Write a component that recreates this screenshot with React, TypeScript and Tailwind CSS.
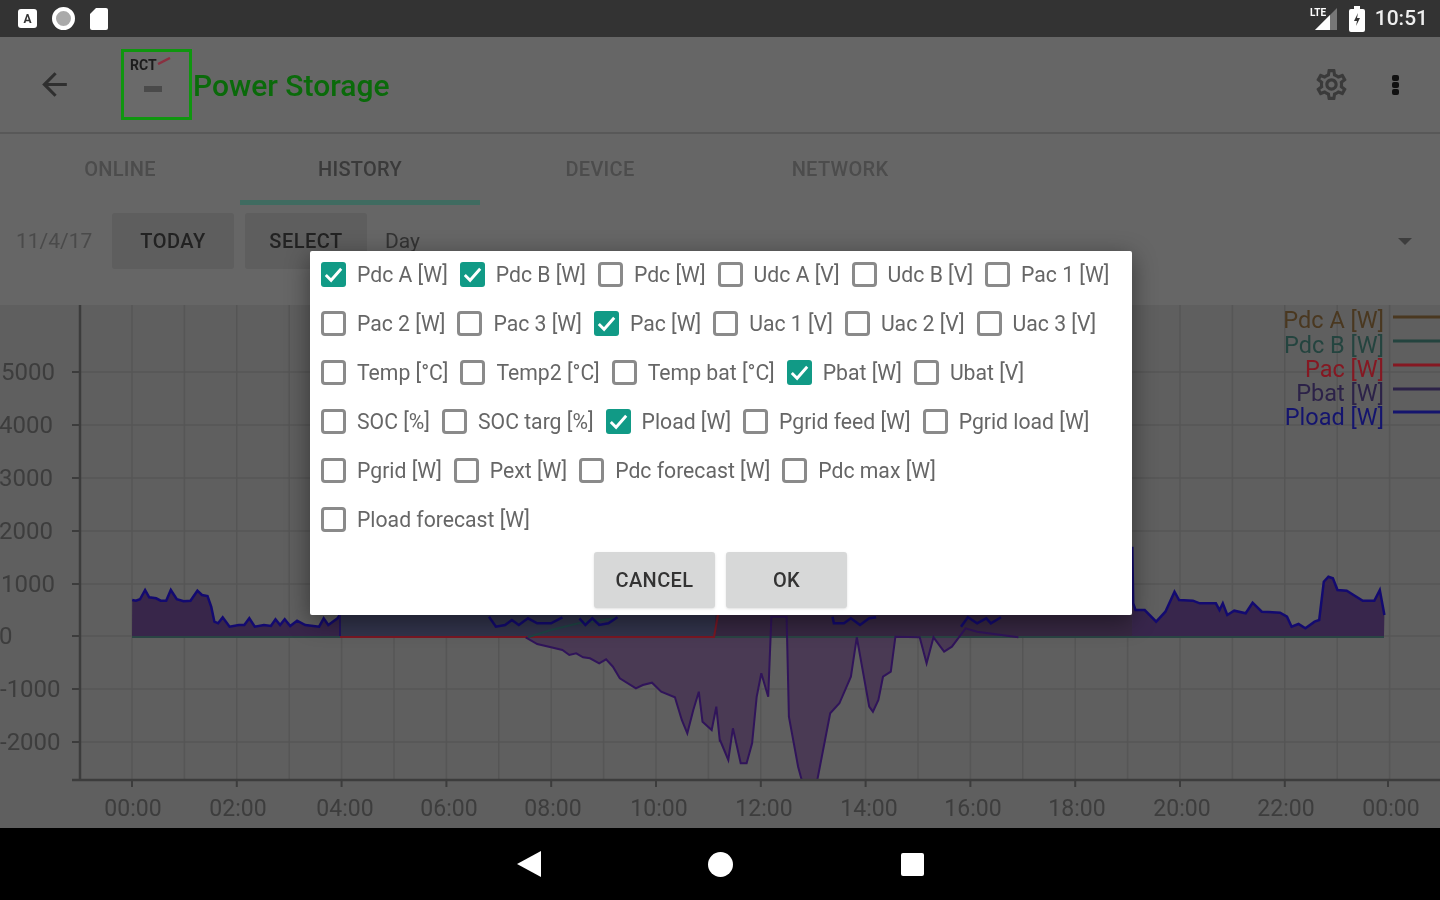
import { MdArrowBack, MdOutlineSettings } from 'react-icons/md'

const rows: [string, boolean][][] = [
  [['Pdc A [W]', true], ['Pdc B [W]', true], ['Pdc [W]', false], ['Udc A [V]', false], ['Udc B [V]', false], ['Pac 1 [W]', false]],
  [['Pac 2 [W]', false], ['Pac 3 [W]', false], ['Pac [W]', true], ['Uac 1 [V]', false], ['Uac 2 [V]', false], ['Uac 3 [V]', false]],
  [['Temp [°C]', false], ['Temp2 [°C]', false], ['Temp bat [°C]', false], ['Pbat [W]', true], ['Ubat [V]', false]],
  [['SOC [%]', false], ['SOC targ [%]', false], ['Pload [W]', true], ['Pgrid feed [W]', false], ['Pgrid load [W]', false]],
  [['Pgrid [W]', false], ['Pext [W]', false], ['Pdc forecast [W]', false], ['Pdc max [W]', false]],
  [['Pload forecast [W]', false]],
]

const yLabels = [
  ['5000', 372, 1], ['4000', 425, -1], ['3000', 478, -1], ['2000', 531, -1], ['1000', 584, 1], ['0', 636, -1], ['-1000', 689, 0], ['-2000', 742, 0],
] as const

const xLabels = [
  ['00:00', 132], ['02:00', 237], ['04:00', 344], ['06:00', 448], ['08:00', 552], ['10:00', 658], ['12:00', 763],
  ['14:00', 868], ['16:00', 972], ['18:00', 1076], ['20:00', 1181], ['22:00', 1285], ['00:00', 1390],
] as const

const legend = [
  ['Pdc A [W]', 327, 317, '#4a3820'],
  ['Pdc B [W]', 352, 341, '#24443f'],
  ['Pac [W]', 376, 365, '#851822'],
  ['Pbat [W]', 400, 389, '#2c2248'],
  ['Pload [W]', 424, 412, '#14146e'],
] as const

// traces were read off a crop stretched 2.178x across and 3x down, so points are in crop units
const toPts = (pts: number[][], offsetX: number) =>
  pts.map(([x, y]) => `${(offsetX + x / 2.178).toFixed(1)},${(560 + y / 3).toFixed(1)}`).join(' ')

const loadLeft = toPts([[288,120],[296,122],[305,118],[316,90],[325,112],[340,115],[350,122],[362,122],[372,90],[385,118],[400,124],[415,122],[430,92],[440,105],[452,108],[460,140],[467,185],[475,190],[485,172],[500,200],[520,195],[532,195],[543,175],[555,200],[575,195],[590,198],[600,178],[610,195],[620,178],[632,198],[647,182],[665,195],[695,200],[705,175],[715,195],[735,175],[740,165]], 0)
const loadMid = toPts([[1065,170],[1080,200],[1100,195],[1115,180],[1130,195],[1150,175],[1170,190],[1200,190],[1225,172]], 0)
const loadMid2 = toPts([[1262,175],[1275,195],[1290,175],[1305,195],[1325,190],[1345,172]], 0)
const loadRightBits = toPts([[245,170],[248,190],[270,190],[285,175],[305,195],[325,175],[340,172]], 720)
const loadRightBits2 = toPts([[525,200],[540,172],[560,190],[580,175],[590,190],[612,172]], 720)
const loadRight = toPts([[898,-40],[900,130],[905,150],[925,150],[950,185],[970,155],[990,95],[1000,120],[1030,122],[1045,130],[1080,130],[1088,150],[1095,130],[1105,165],[1120,152],[1145,160],[1160,128],[1180,155],[1220,158],[1235,170],[1245,200],[1260,192],[1275,205],[1295,185],[1305,180],[1315,65],[1325,50],[1335,55],[1345,90],[1365,92],[1400,122],[1425,122],[1437,90],[1447,165]], 720)
const batLeft = toPts([[1145,232],[1170,252],[1200,262],[1225,270],[1240,285],[1255,280],[1270,292],[1285,295],[1305,310],[1320,298],[1335,320],[1350,355],[1385,385],[1400,375],[1420,368],[1440,395],[1470,412],[1485,480],[1497,520],[1510,450],[1522,395],[1530,485],[1550,510],[1560,440],[1568,545]], 0)
const batRight = toPts([[0,540],[18,600],[28,505],[45,610],[58,610],[70,550],[80,410],[90,340],[105,410],[112,170],[145,170],[150,470],[170,620],[178,660],[212,660],[240,460],[260,430],[285,350],[298,232],[325,440],[333,455],[345,420],[355,350],[372,335],[382,230],[435,232],[450,310],[465,232],[488,275],[505,260],[535,205],[560,215],[650,232]], 720)

function Chart() {
  const hours = Array.from({ length: 25 }, (_, i) => 132 + i * 52.4)
  return (
    <svg viewBox="0 305 1440 523" className="block h-full w-full">
      {/* grid */}
      {hours.map((x) => (
        <line key={x} x1={x} x2={x} y1={305} y2={780} stroke="#565656" strokeWidth="1.5" />
      ))}
      {yLabels.map(([, y]) => (
        <line key={y} x1={72} x2={1440} y1={y} y2={y} stroke="#565656" strokeWidth="1.5" />
      ))}

      {/* filled areas */}
      <polygon points={`132,636 ${loadLeft} 340,636`} fill="#38264a" />
      <polygon points="340,615 715,615 715,636 340,636" fill="#32344c" />
      <polygon points={`1132,636 ${loadRight} 1384,636`} fill="#38264c" />
      <polygon points={`${batLeft} ${batRight}`} fill="#4a3a54" />
      <polygon points="715,615 1132,615 1132,636 715,636" fill="#372842" />

      {/* traces */}
      <polyline points="132,637 1384,637" fill="none" stroke="#2a4444" strokeWidth="2" />
      <polyline points="340,637 714,637 718,615" fill="none" stroke="#7a1824" strokeWidth="2" />
      <polyline points={toPts([[1150,232],[1200,210],[1260,190],[1340,175]], 0)} fill="none" stroke="#1f4546" strokeWidth="2" />
      <polyline points={batLeft} fill="none" stroke="#30145a" strokeWidth="2" />
      <polyline points={batRight} fill="none" stroke="#30145a" strokeWidth="2" />
      {[loadLeft, loadMid, loadMid2, loadRightBits, loadRightBits2, loadRight].map((pts, i) => (
        <polyline key={i} points={pts} fill="none" stroke="#130a70" strokeWidth="2.5" />
      ))}
      <line x1="340" x2="340" y1="615" y2="636" stroke="#221460" strokeWidth="2" />

      {/* axes */}
      <line x1="80" x2="80" y1="305" y2="781" stroke="#3c3c3c" strokeWidth="2.5" />
      <line x1="72" x2="1440" y1="780" y2="780" stroke="#3c3c3c" strokeWidth="2.5" />
      {xLabels.map(([, x], i) => (
        <line key={i} x1={x > 1300 ? 1388 : 132 + i * 104.8} x2={x > 1300 ? 1388 : 132 + i * 104.8} y1={780} y2={787} stroke="#3c3c3c" strokeWidth="2" />
      ))}
      {yLabels.map(([label, y, x]) => (
        <g key={label}>
          <line x1="72" x2="80" y1={y} y2={y} stroke="#3c3c3c" strokeWidth="2" />
          <text x={x} y={y + 8} fontSize="24" fill="#3d3d3d" fontFamily="Roboto, sans-serif">{label}</text>
        </g>
      ))}
      {xLabels.map(([label, x], i) => (
        <text key={i} x={x + 1} y="816" textAnchor="middle" fontSize="23" fill="#3d3d3d" fontFamily="Roboto, sans-serif">{label}</text>
      ))}

      {/* legend */}
      {legend.map(([label, textY, lineY, color]) => (
        <g key={label}>
          <text x="1384" y={textY + 1} textAnchor="end" fontSize="23.5" fill={color} fontFamily="Roboto, sans-serif">{label}</text>
          <line x1="1393" x2="1440" y1={lineY} y2={lineY} stroke={color} strokeWidth="3" />
        </g>
      ))}
    </svg>
  )
}

function CheckItem({ label, checked }: { label: string; checked: boolean }) {
  return (
    <div className="flex items-center gap-[11px]">
      {checked ? (
        <span className="flex h-[25px] w-[25px] items-center justify-center rounded-[3px] bg-[#119a86]">
          <svg viewBox="0 0 26 26" className="h-[25px] w-[25px]">
            <path d="M5 13.5l5.5 5.5L21 7" fill="none" stroke="#fff" strokeWidth="3" />
          </svg>
        </span>
      ) : (
        <span className="h-[25px] w-[25px] rounded-[4px] border-[3px] border-[#8a8a8a]" />
      )}
      <span className="text-[21.2px] leading-none whitespace-nowrap text-[#666]">{label}</span>
    </div>
  )
}

function Dialog() {
  return (
    <div className="absolute top-[251px] left-[310px] h-[364px] w-[822px] rounded-[2px] bg-white pl-[11px] shadow-[0_6px_24px_rgba(0,0,0,0.45)]">
      <div className="-mt-[1px] flex flex-col">
        {rows.map((row, i) => (
          <div key={i} className="flex h-[49px] items-center gap-[12px]">
            {row.map(([label, checked]) => (
              <CheckItem key={label} label={label} checked={checked} />
            ))}
          </div>
        ))}
      </div>
      <div className="mt-[8px] ml-[273px] flex gap-[11px]">
        <button className="h-[56px] w-[121px] rounded-[3px] bg-[#d7d8d8] text-[20px] font-medium tracking-[0.4px] text-[#333] shadow-sm">CANCEL</button>
        <button className="h-[56px] w-[121px] rounded-[3px] bg-[#d7d8d8] text-[20px] font-medium tracking-[0.4px] text-[#333] shadow-sm">OK</button>
      </div>
    </div>
  )
}

export default function App() {
  return (
    <div className="h-[900px] w-[1440px] overflow-hidden bg-[#555]">
      <div className="relative flex h-[900px] w-[1440px] flex-col overflow-hidden bg-[#666] blur-[0.6px] [font-family:Roboto,sans-serif]">
        {/* Status bar */}
        <div className="flex h-[37px] items-center justify-between bg-[#333] pr-[12px] pl-[18px]">
          <div className="flex items-center gap-[15px]">
            <span className="flex h-[19px] w-[19px] items-center justify-center rounded-[3px] bg-white text-[12px] leading-none font-bold text-[#333]">A</span>
            <span className="h-[23px] w-[23px] rounded-full border-[4px] border-white bg-[#aaa]" />
            <svg viewBox="0 0 18 22" className="h-[22px] w-[18px]">
              <path d="M6 0h10a2 2 0 012 2v18a2 2 0 01-2 2H2a2 2 0 01-2-2V6z" fill="#fff" />
            </svg>
          </div>
          <div className="flex items-center">
            <svg viewBox="0 0 28 24" className="h-[24px] w-[28px]">
              <path d="M27 1v22H5z" fill="#777" />
              <path d="M20 8v15H5z" fill="#fff" />
              <rect x="0" y="0" width="16" height="10" fill="#333" />
              <text x="0" y="9" fontSize="10" fontWeight="700" fill="#fff" fontFamily="Roboto, sans-serif">LTE</text>
            </svg>
            <svg viewBox="0 0 16 26" className="ml-[11px] h-[26px] w-[16px]">
              <path d="M5 0h6v3h3a2 2 0 012 2v19a2 2 0 01-2 2H2a2 2 0 01-2-2V5a2 2 0 012-2h3z" fill="#fff" />
              <path d="M9 7l-4 8h3l-1 5 4-8H8z" fill="#333" />
            </svg>
            <span className="ml-[10px] text-[21px] leading-none font-medium text-[#eee]">10:51</span>
          </div>
        </div>

        {/* App bar */}
        <div className="flex h-[97px] items-center border-b-[2px] border-[#585858] pr-[41px] pl-[36px]">
          <MdArrowBack size={37} className="text-[#2f2f2f]" />
          <div className="ml-[48px] flex h-[71px] w-[71px] flex-col items-start border-[3px] border-[#0f960f] bg-[#6a6a6a] pt-[5px] pl-[6px]">
            <div className="flex items-start">
              <span className="text-[14px] leading-[16px] font-bold text-[#1c1c1c]">RCT</span>
              <svg viewBox="0 0 14 8" className="h-[8px] w-[14px]">
                <path d="M1 7L13 1" stroke="#8a3040" strokeWidth="2.5" />
              </svg>
            </div>
            <span className="mt-[13px] ml-[14px] h-[6px] w-[18px] bg-[#4a4a4a]" />
          </div>
          <span className="ml-[1px] pt-[2px] text-[30px] leading-none font-medium whitespace-nowrap text-[#0a6a0a]">Power Storage</span>
          <MdOutlineSettings size={37} className="ml-auto text-[#3a3a3a]" />
          <div className="ml-[42px] flex flex-col gap-[1px]">
            <span className="h-[6px] w-[7px] rounded-[2px] bg-[#111]" />
            <span className="h-[6px] w-[7px] rounded-[2px] bg-[#111]" />
            <span className="h-[6px] w-[7px] rounded-[2px] bg-[#111]" />
          </div>
        </div>

        {/* Tabs */}
        <div className="flex h-[71px]">
          {['ONLINE', 'HISTORY', 'DEVICE', 'NETWORK'].map((tab) => (
            <div
              key={tab}
              className={`flex w-[240px] items-center justify-center border-b-[5px] pt-[3px] text-[20px] font-medium tracking-[0.3px] ${
                tab === 'HISTORY' ? 'border-[#3f6b60] text-[#3a3a3a]' : 'border-transparent text-[#4c4c4c]'
              }`}
            >
              {tab}
            </div>
          ))}
        </div>

        {/* Date row */}
        <div className="flex h-[100px] items-start pt-[8px] pr-[28px] pl-[16px]">
          <span className="mt-[18px] w-[96px] text-[21px] leading-none text-[#4a4a4a]">11/4/17</span>
          <button className="h-[56px] w-[122px] rounded-[3px] bg-[#5e5e5e] text-[20px] font-medium tracking-[0.5px] text-[#222]">TODAY</button>
          <button className="ml-[11px] h-[56px] w-[122px] rounded-[3px] bg-[#5e5e5e] text-[20px] font-medium tracking-[0.5px] text-[#222]">SELECT</button>
          <span className="mt-[18px] ml-[18px] text-[21px] leading-none text-[#333]">Day</span>
          <span className="mt-[25px] ml-auto h-0 w-0 border-x-[7px] border-t-[7px] border-x-transparent border-t-[#3d3d3d]" />
        </div>

        {/* Chart */}
        <div className="min-h-0 flex-1 bg-[#5f5f5f]">
          <Chart />
        </div>

        {/* Nav bar */}
        <div className="flex h-[72px] items-center justify-center bg-black">
          <svg viewBox="0 0 24 26" className="h-[26px] w-[24px]">
            <path d="M24 0v26L0 13z" fill="#fff" />
          </svg>
          <span className="ml-[167px] h-[25px] w-[25px] rounded-full bg-white" />
          <span className="ml-[168px] h-[23px] w-[23px] rounded-[2px] bg-white" />
        </div>

        <Dialog />
      </div>
    </div>
  )
}
